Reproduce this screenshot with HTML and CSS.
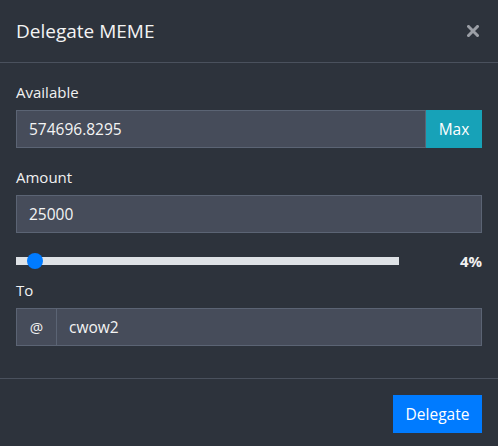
FILE: index.html
```html
<!DOCTYPE html>
<html>
<head>
<meta charset="utf-8">
<link rel="stylesheet" href="styles.css">
</head>
<body>
<div class="modal">
  <div class="modal-header">
    <h5 class="modal-title">Delegate MEME</h5>
    <button class="close" type="button" aria-label="Close">
      <svg width="12" height="12" viewBox="0 0 12 12"><path d="M1.5 1.5 L10.5 10.5 M10.5 1.5 L1.5 10.5" stroke="#9b9fa6" stroke-width="3" stroke-linecap="square"/></svg>
    </button>
  </div>
  <div class="modal-body">
    <div class="form-group">
      <label class="label">Available</label>
      <div class="input-group">
        <div class="form-control">574696.8295</div>
        <button class="btn btn-info" type="button">Max</button>
      </div>
    </div>
    <div class="form-group">
      <label class="label label-amount">Amount</label>
      <div class="input-group">
        <div class="form-control">25000</div>
      </div>
    </div>
    <div class="slider-row">
      <div class="slider-col">
        <input class="range" type="range" min="0" max="100" value="3">
      </div>
      <div class="pct">4%</div>
    </div>
    <div class="form-group">
      <label class="label">To</label>
      <div class="input-group">
        <div class="prepend">@</div>
        <div class="form-control">cwow2</div>
      </div>
    </div>
  </div>
  <div class="modal-footer">
    <button class="btn btn-primary" type="button">Delegate</button>
  </div>
</div>
</body>
</html>
```

FILE: styles.css
```css
html, body {
  margin: 0;
  padding: 0;
  background: #2d333c;
  font-family: "Open Sans", "Noto Sans", sans-serif;
  color: #f1f1f1;
  font-size: 16px;
  line-height: 24px;
}
.modal {
  width: 498px;
  height: 446px;
  overflow: hidden;
  background: #2d333c;
}
.modal-header {
  display: flex;
  align-items: flex-start;
  justify-content: space-between;
  padding: 16px;
  border-bottom: 1px solid #4a515d;
}
.modal-title {
  margin: 0;
  font-size: 19px;
  font-weight: 400;
  line-height: 30px;
  color: #f4f4f4;
}
.close {
  background: none;
  border: 0;
  padding: 0;
  margin: 9px 3px 0 0;
  width: 12px;
  height: 12px;
  display: block;
}
.close svg { display: block; }
.modal-body {
  padding: 17px 16px 16px;
}
.form-group {
  margin-bottom: 16px;
}
.label {
  display: block;
  margin-bottom: 6px;
  font-size: 15px;
}
.label-amount { padding-top: 1px; }
.input-group {
  display: flex;
  height: 38px;
}
.form-control {
  flex: 1;
  background: #464c5a;
  border: 1px solid #5b6474;
  padding: 0 12px;
  font-size: 15.5px;
  line-height: 36px;
  color: #f4f4f4;
}
.prepend {
  width: 39px;
  background: #464c5a;
  border: 1px solid #5b6474;
  border-right: 0;
  text-align: center;
  line-height: 36px;
  font-size: 15px;
}
.btn {
  border: 0;
  font-family: inherit;
  font-size: 15.5px;
  color: #fff;
  padding: 0 12px;
  height: 38px;
}
.btn-info {
  background: #17a2b8;
  width: 56px;
}
.btn-primary {
  background: #007bff;
  width: 89px;
}
.slider-row {
  display: flex;
  align-items: center;
  height: 24px;
  margin-bottom: 5px;
}
.slider-col {
  width: 383px;
  height: 22px;
  display: flex;
  align-items: center;
}
.range {
  -webkit-appearance: none;
  appearance: none;
  width: 383px;
  height: 22px;
  margin: 0;
  padding: 0;
  background: transparent;
}
.range::-webkit-slider-runnable-track {
  height: 8px;
  background: #dee2e6;
  border: 0;
}
.range::-webkit-slider-thumb {
  -webkit-appearance: none;
  appearance: none;
  width: 16px;
  height: 16px;
  border-radius: 50%;
  background: #007bff;
  border: 0;
  margin-top: -4px;
}
.pct {
  flex: 1;
  text-align: right;
  font-weight: 700;
  font-size: 15px;
}
.modal-footer {
  display: flex;
  justify-content: flex-end;
  padding: 16px;
  border-top: 1px solid #4a515d;
}
```
